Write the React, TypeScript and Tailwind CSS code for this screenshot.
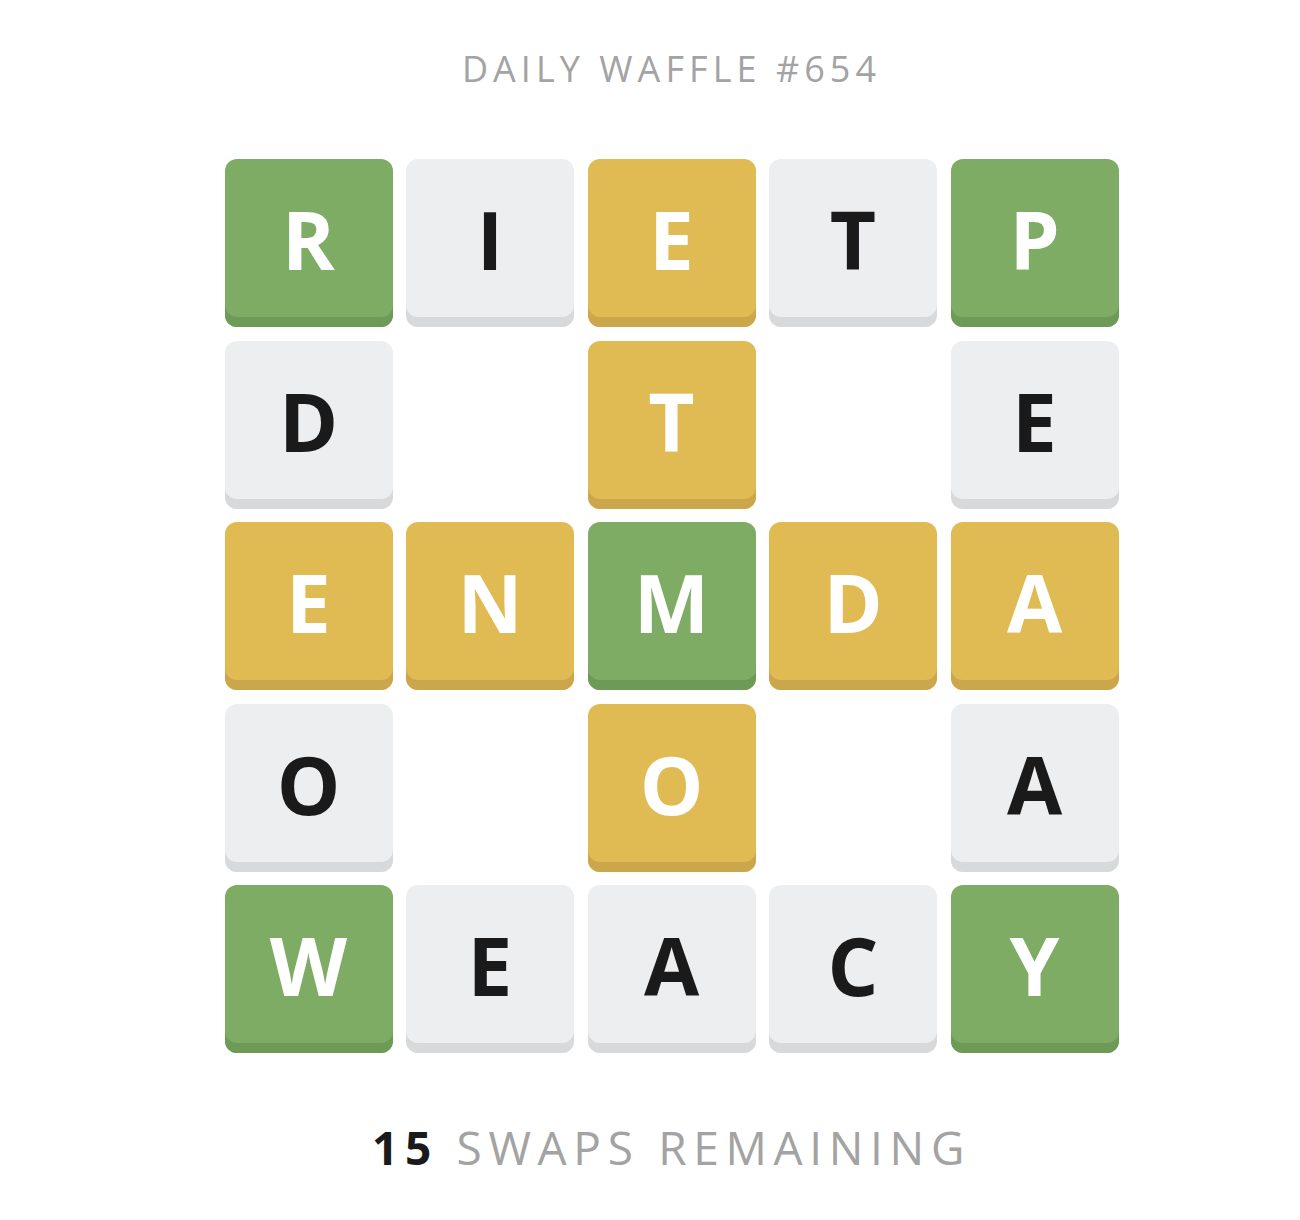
import React from "react";

type C = "g" | "y" | "w" | null;
const grid: [string, C][][] = [
  [["R","g"],["I","w"],["E","y"],["T","w"],["P","g"]],
  [["D","w"],["",null],["T","y"],["",null],["E","w"]],
  [["E","y"],["N","y"],["M","g"],["D","y"],["A","y"]],
  [["O","w"],["",null],["O","y"],["",null],["A","w"]],
  [["W","g"],["E","w"],["A","w"],["C","w"],["Y","g"]],
];

function Tile({ l, c }: { l: string; c: C }) {
  if (!c) return <div className="w-[168px] h-[168px]" />;
  const cls =
    c === "g"
      ? "bg-[#7eac65] shadow-[inset_0_-10px_0_#6d9a56] text-white"
      : c === "y"
      ? "bg-[#e0bb53] shadow-[inset_0_-10px_0_#cba64a] text-white"
      : "bg-[#edeef0] shadow-[inset_0_-10px_0_#d8d9db] text-[#1a1a1a]";
  return (
    <div className={`w-[168px] h-[168px] rounded-[12px] flex items-center justify-center pb-[8px] ${cls}`}>
      <span className="text-[80px] font-bold leading-none">{l}</span>
    </div>
  );
}

export default function App() {
  return (
    <div className="w-[1300px] h-[1220px] bg-white flex flex-col items-center pl-[43px]" style={{ fontFamily: "'Open Sans', 'Noto Sans', sans-serif" }}>
      <div className="mt-[45px] text-[36px] tracking-[0.14em] text-[#a3a3a3] font-normal leading-[48px]">DAILY WAFFLE #654</div>
      <div className="mt-[66px] grid grid-cols-5 gap-x-[13.5px] gap-y-[13.5px]">
        {grid.flat().map(([l, c], i) => (
          <Tile key={i} l={l} c={c} />
        ))}
      </div>
      <div className="mt-[66px] text-[46px] tracking-[0.145em] leading-[56px]">
        <span className="font-bold text-[#1a1a1a]">15</span>
        <span className="text-[#a3a3a3]"> SWAPS REMAINING</span>
      </div>
    </div>
  );
}
